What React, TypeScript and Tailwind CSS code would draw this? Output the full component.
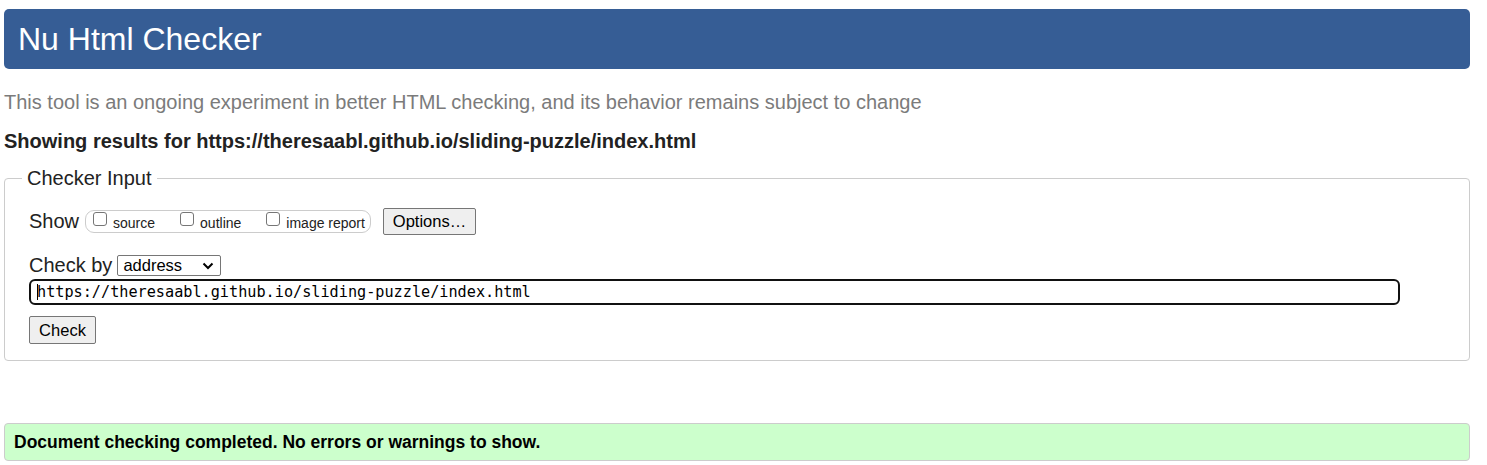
const sans = "font-['Liberation_Sans',Arial,sans-serif]";

export default function App() {
  return (
    <div className={`w-[1466px] ml-[4px] pt-[9px] ${sans}`}>
      {/* Title bar */}
      <div className="h-[60px] rounded-[5px] bg-[#365d95] flex items-center pl-[14px]">
        <h1 className="text-[32px] leading-none text-white">Nu Html Checker</h1>
      </div>

      <p className="mt-[22px] text-[20px] leading-[23px] text-[#7b7b7b]">
        This tool is an ongoing experiment in better HTML checking, and its behavior remains subject to change
      </p>

      <p className="mt-[16px] text-[20px] leading-[23px] font-bold text-[#222]">
        Showing results for https://theresaabl.github.io/sliding-puzzle/index.html
      </p>

      {/* Checker input */}
      <fieldset className="mt-[14px] border border-[#cccccc] rounded-[4px] px-0 pb-[16px]">
        <legend className="ml-[17px] px-[5px] text-[20px] leading-[22px] text-[#222]">Checker Input</legend>

        <div className="pl-[24px]">
          <div className="mt-[18px] flex items-center h-[28px]">
            <span className="text-[20px] leading-[22px] text-[#222]">Show</span>
            <div className="ml-[6px] h-[23px] w-[286px] border border-[#cccccc] rounded-[9px] flex items-start pl-[7px] text-[14px] text-[#222]">
              <label className="flex items-start">
                <input type="checkbox" className="appearance-none mt-[1px] w-[14px] h-[14px] border border-[#767676] rounded-[3px] bg-white" />
                <span className="ml-[6px] mt-[4px] leading-[16px]">source</span>
              </label>
              <label className="flex items-start ml-[25px]">
                <input type="checkbox" className="appearance-none mt-[1px] w-[14px] h-[14px] border border-[#767676] rounded-[3px] bg-white" />
                <span className="ml-[6px] mt-[4px] leading-[16px]">outline</span>
              </label>
              <label className="flex items-start ml-[25px]">
                <input type="checkbox" className="appearance-none mt-[1px] w-[14px] h-[14px] border border-[#767676] rounded-[3px] bg-white" />
                <span className="ml-[6px] mt-[4px] leading-[16px]">image report</span>
              </label>
            </div>
            <button className="ml-[12px] h-[27px] w-[93px] border border-[#767676] rounded-[2px] bg-[#efefef] text-[16.5px] text-black">
              Options…
            </button>
          </div>

          <div className="mt-[19px] flex items-center h-[22px]">
            <span className="text-[20px] leading-[22px] text-[#222]">Check by</span>
            <div className="relative ml-[5px]">
              <select className="appearance-none block h-[21px] w-[104px] border border-[#767676] rounded-[2px] bg-white pl-[5px] text-[16.5px] leading-[18px] text-black outline-none">
                <option>address</option>
              </select>
              <svg className="absolute right-[7px] top-[7px] pointer-events-none" width="12" height="8" viewBox="0 0 12 8">
                <path d="M1.5 1.5 L6 6 L10.5 1.5" fill="none" stroke="#000" strokeWidth="2" />
              </svg>
            </div>
          </div>

          <div className="mt-[3px] w-[1371px] h-[26px] border-2 border-[#111] rounded-[6px] flex items-center pl-[6px]">
            <span className="font-['DejaVu_Sans_Mono',monospace] text-[15.2px] leading-none text-black">
              <span className="inline-block w-px h-[16px] bg-black align-middle -mr-px" />
              https://theresaabl.github.io/sliding-puzzle/index.html
            </span>
          </div>

          <button className="mt-[11px] h-[28px] w-[67px] border border-[#767676] rounded-[2px] bg-[#efefef] text-[16.5px] text-black">
            Check
          </button>
        </div>
      </fieldset>

      {/* Result */}
      <div className="mt-[62px] h-[38px] border border-[#cccccc] rounded-[4px] bg-[#ccffcc] flex items-center pl-[9px]">
        <p className="text-[17.5px] font-bold text-black">
          Document checking completed. No errors or warnings to show.
        </p>
      </div>
    </div>
  );
}
